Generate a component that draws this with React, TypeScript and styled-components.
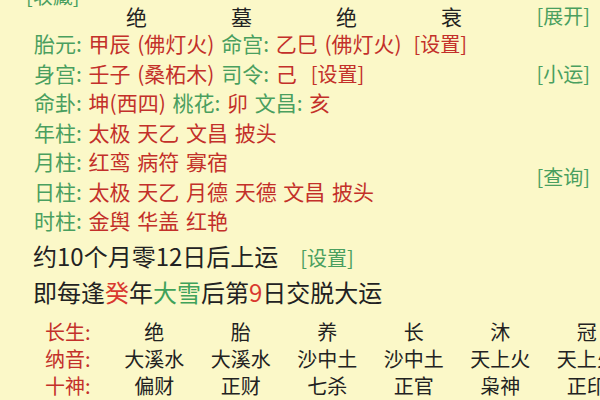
import React from "react";
import styled, { createGlobalStyle } from "styled-components";

const Global = createGlobalStyle`
  html, body { margin: 0; padding: 0; background: #fbf8c8; }
  body { font-family: "Noto Sans CJK SC", "Noto Sans", sans-serif; }
`;

const GREEN = "#4a9f5f";
const RED = "#c3302a";
const INK = "#222222";

const Page = styled.div`
  width: 600px;
  height: 400px;
  overflow: hidden;
  background: #fbf8c8;
  color: ${INK};
`;

const Top = styled.div`
  display: grid;
  grid-template-columns: 1fr auto;
`;

const Main = styled.div`
  display: flex;
  flex-direction: column;
`;

const Collect = styled.div`
  margin-top: -14px;
  padding-left: 26px;
  font-size: 20px;
  line-height: 20px;
  color: ${GREEN};
`;

const HeaderRow = styled.div`
  display: grid;
  grid-template-columns: repeat(4, 105px);
  padding-left: 84px;
  font-size: 21px;
  line-height: 20px;
  color: ${INK};
`;

const HeaderCell = styled.span`
  text-align: center;
`;

const InfoList = styled.div`
  margin-top: 3px;
  padding-left: 34px;
  display: flex;
  flex-direction: column;
`;

const InfoRow = styled.div`
  font-size: 21px;
  line-height: 29.5px;
  word-spacing: 2px;
  white-space: nowrap;
`;

const Label = styled.span`
  color: ${GREEN};
`;

const Value = styled.span`
  color: ${RED};
`;

const Link = styled.span<{ $tone: "red" | "green"; $gap?: number }>`
  color: ${(p) => (p.$tone === "red" ? RED : GREEN)};
  margin-left: ${(p) => p.$gap ?? 0}px;
  font-size: 20px;
`;

const Aside = styled.div`
  display: flex;
  flex-direction: column;
  align-items: flex-end;
  padding-right: 10px;
`;

const AsideLink = styled.span<{ $top: number }>`
  margin-top: ${(p) => p.$top}px;
  font-size: 20px;
  line-height: 20px;
  color: ${GREEN};
`;

const Notes = styled.div`
  margin-top: 2px;
  padding-left: 33px;
  font-size: 24px;
  color: ${INK};
`;

const NoteLine = styled.div<{ $lh: number }>`
  line-height: ${(p) => p.$lh}px;
  white-space: nowrap;
`;

const Mark = styled.span<{ $tone: "red" | "green" }>`
  color: ${(p) => (p.$tone === "red" ? "#d9392f" : "#3fa25a")};
`;

const SmallLink = styled.span`
  font-size: 20px;
  color: ${GREEN};
  margin-left: 22px;
`;

const Table = styled.div`
  margin-top: 10px;
  padding-left: 45px;
  display: grid;
  grid-template-columns: 66px repeat(6, 86.5px);
  grid-auto-rows: 27px;
  font-size: 20px;
  line-height: 27px;
  white-space: nowrap;
`;

const TLabel = styled.span`
  color: ${RED};
`;

const TCell = styled.span`
  text-align: center;
  color: ${INK};
`;

const table: [string, string[]][] = [
  ["长生:", ["绝", "胎", "养", "长", "沐", "冠"]],
  ["纳音:", ["大溪水", "大溪水", "沙中土", "沙中土", "天上火", "天上火"]],
  ["十神:", ["偏财", "正财", "七杀", "正官", "枭神", "正印"]],
];

export default function App() {
  return (
    <Page>
      <Global />
      <Top>
        <Main>
          <Collect>[收藏]</Collect>
          <HeaderRow>
            {["绝", "墓", "绝", "衰"].map((c, i) => (
              <HeaderCell key={i}>{c}</HeaderCell>
            ))}
          </HeaderRow>
          <InfoList>
            <InfoRow>
              <Label>胎元: </Label>
              <Value>甲辰 (佛灯火)</Value>
              <Label> 命宫: </Label>
              <Value>乙巳 (佛灯火)</Value>
              <Link $tone="red" $gap={12}>[设置]</Link>
            </InfoRow>
            <InfoRow>
              <Label>身宫: </Label>
              <Value>壬子 (桑柘木)</Value>
              <Label> 司令: </Label>
              <Value>己</Value>
              <Link $tone="red" $gap={14}>[设置]</Link>
            </InfoRow>
            <InfoRow>
              <Label>命卦: </Label>
              <Value>坤(西四)</Value>
              <Label> 桃花: </Label>
              <Value>卯</Value>
              <Label> 文昌: </Label>
              <Value>亥</Value>
            </InfoRow>
            <InfoRow>
              <Label>年柱: </Label>
              <Value>太极 天乙 文昌 披头</Value>
            </InfoRow>
            <InfoRow>
              <Label>月柱: </Label>
              <Value>红鸾 病符 寡宿</Value>
            </InfoRow>
            <InfoRow>
              <Label>日柱: </Label>
              <Value>太极 天乙 月德 天德 文昌 披头</Value>
            </InfoRow>
            <InfoRow>
              <Label>时柱: </Label>
              <Value>金舆 华盖 红艳</Value>
            </InfoRow>
          </InfoList>
        </Main>
        <Aside>
          <AsideLink $top={6}>[展开]</AsideLink>
          <AsideLink $top={38}>[小运]</AsideLink>
          <AsideLink $top={83}>[查询]</AsideLink>
        </Aside>
      </Top>
      <Notes>
        <NoteLine $lh={36}>
          约10个月零12日后上运<SmallLink>[设置]</SmallLink>
        </NoteLine>
        <NoteLine $lh={32}>
          即每逢<Mark $tone="red">癸</Mark>年<Mark $tone="green">大雪</Mark>后第
          <Mark $tone="red">9</Mark>日交脱大运
        </NoteLine>
      </Notes>
      <Table>
        {table.map(([label, cells]) => (
          <React.Fragment key={label}>
            <TLabel>{label}</TLabel>
            {cells.map((c, i) => (
              <TCell key={i}>{c}</TCell>
            ))}
          </React.Fragment>
        ))}
      </Table>
    </Page>
  );
}
